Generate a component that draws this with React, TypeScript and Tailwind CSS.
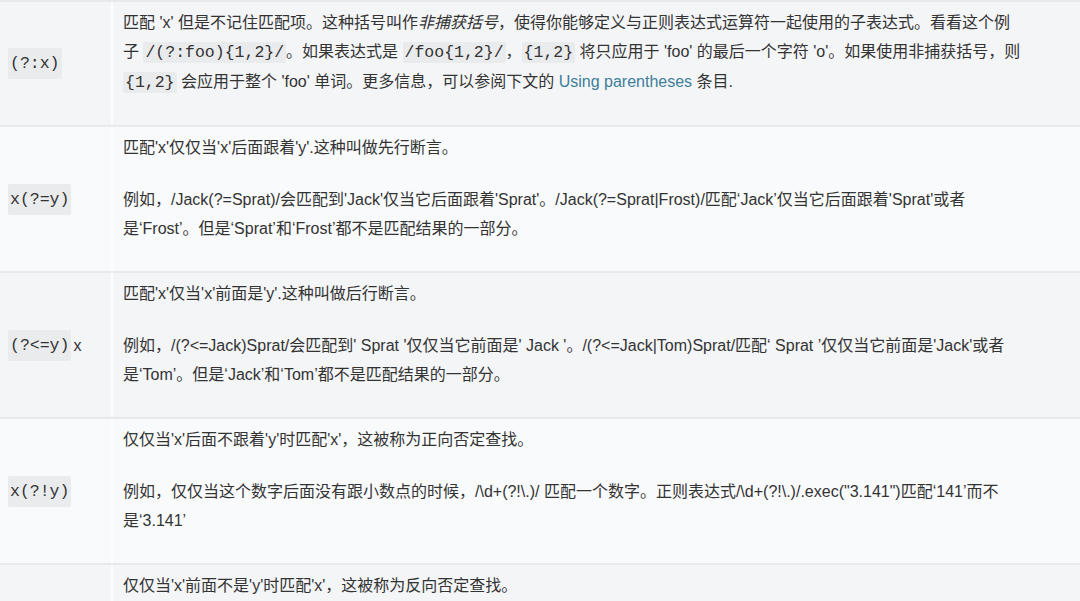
import type { ReactNode } from "react";

const Code = ({ children }: { children: ReactNode }) => (
  <code className="rounded-[2px] bg-[#eaebed] px-[2px] py-[1px] font-['Liberation_Mono',monospace] text-[16.5px] text-[#333]">
    {children}
  </code>
);

type Row = { term: ReactNode; body: ReactNode[] };

// line breaks follow the original page, whose latin glyphs run a little wider
const rows: Row[] = [
  {
    term: <Code>(?:x)</Code>,
    body: [
      <>
        匹配 'x' 但是不记住匹配项。这种括号叫作<em>非捕获括号</em>，使得你能够定义与正则表达式运算符一起使用的子表达式。看看这个例
        <br />子 <Code>/(?:foo){"{1,2}"}/</Code>。如果表达式是 <Code>/foo{"{1,2}"}/</Code>，<Code>{"{1,2}"}</Code> 将只应用于 'foo' 的最后一个字符 'o'。如果使用非捕获括号，则
        <br />
        <Code>{"{1,2}"}</Code> 会应用于整个 'foo' 单词。更多信息，可以参阅下文的{" "}
        <a href="#" className="text-[#3d7e9a]">
          Using parentheses
        </a>{" "}
        条目.
      </>,
    ],
  },
  {
    term: <Code>x(?=y)</Code>,
    body: [
      <>匹配'x'仅仅当'x'后面跟着'y'.这种叫做先行断言。</>,
      <>
        例如，/Jack(?=Sprat)/会匹配到'Jack'仅当它后面跟着'Sprat'。/Jack(?=Sprat|Frost)/匹配‘Jack’仅当它后面跟着'Sprat'或者
        <br />
        是‘Frost’。但是‘Sprat’和‘Frost’都不是匹配结果的一部分。
      </>,
    ],
  },
  {
    term: (
      <>
        <Code>(?&lt;=y)</Code>
        <span className="ml-[2px] font-['Liberation_Sans',sans-serif] text-[16px]">x</span>
      </>
    ),
    body: [
      <>匹配'x'仅当'x'前面是'y'.这种叫做后行断言。</>,
      <>
        例如，/(?&lt;=Jack)Sprat/会匹配到' Sprat '仅仅当它前面是' Jack '。/(?&lt;=Jack|Tom)Sprat/匹配‘ Sprat ’仅仅当它前面是'Jack'或者
        <br />
        是‘Tom’。但是‘Jack’和‘Tom’都不是匹配结果的一部分。
      </>,
    ],
  },
  {
    term: <Code>x(?!y)</Code>,
    body: [
      <>仅仅当'x'后面不跟着'y'时匹配'x'，这被称为正向否定查找。</>,
      <>
        例如，仅仅当这个数字后面没有跟小数点的时候，/\d+(?!\.)/ 匹配一个数字。正则表达式/\d+(?!\.)/.exec("3.141")匹配‘141’而不
        <br />
        是‘3.141’
      </>,
    ],
  },
  {
    term: (
      <>
        <Code>(?&lt;!y)</Code>
        <span className="ml-[2px] font-['Liberation_Sans',sans-serif] text-[16px]">x</span>
      </>
    ),
    body: [
      <>仅仅当'x'前面不是'y'时匹配'x'，这被称为反向否定查找。</>,
      <>
        例如, 仅仅当这个数字前面没有负号的时候，/(?&lt;!-)\d+/ 匹配一个数字。/(?&lt;!-)\d+/.exec('3') 匹配到 "3"。
        <br />
        /(?&lt;!-)\d+/.exec('-3') 因为这个数字前有负号，所以没有匹配到。
      </>,
    ],
  },
];

export default function App() {
  return (
    <div className="h-[601px] w-[1080px] overflow-hidden bg-white font-['Liberation_Sans','Noto_Sans_CJK_SC',sans-serif] text-[16px] leading-[29px] text-[#333]">
      {rows.map((row, i) => (
        <div
          key={i}
          className={`flex border-t-2 border-[#e7e9ec] ${i % 2 === 0 ? "bg-[#f4f5f7]" : "bg-[#f9fafb]"}`}
        >
          <div className="flex w-[111px] shrink-0 items-center pl-2 font-['Liberation_Mono',monospace] text-[15.5px]">
            {row.term}
          </div>
          <div className="flex-1 border-l-2 border-[#fdfdfe] px-[10px] pt-[6px] pb-[5px]">
            {row.body.map((p, j) => (
              <p key={j} className="mb-[23px]">
                {p}
              </p>
            ))}
          </div>
        </div>
      ))}
    </div>
  );
}
